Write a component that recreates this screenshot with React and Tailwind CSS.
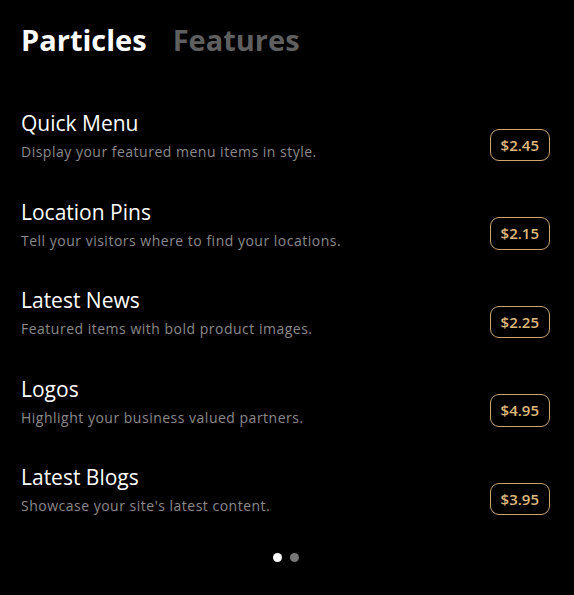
const ITEMS = [
  { title: 'Quick Menu', desc: 'Display your featured menu items in style.', price: '$2.45' },
  { title: 'Location Pins', desc: 'Tell your visitors where to find your locations.', price: '$2.15' },
  { title: 'Latest News', desc: 'Featured items with bold product images.', price: '$2.25' },
  { title: 'Logos', desc: 'Highlight your business valued partners.', price: '$4.95' },
  { title: 'Latest Blogs', desc: "Showcase your site's latest content.", price: '$3.95' },
]

export default function App() {
  return (
    <div className="min-h-[595px] bg-black pl-[21px] pr-[24px] pt-[22px] font-['Open_Sans',sans-serif]">
      <div className="flex items-baseline gap-[26px]">
        <h1 className="text-[29px] font-bold leading-9 text-white">Particles</h1>
        <h2 className="text-[29px] font-bold leading-9 text-[#5f5f5f]">Features</h2>
      </div>

      <div className="mt-[51px] flex flex-col gap-[35.5px]">
        {ITEMS.map((item) => (
          <div key={item.title} className="flex items-center justify-between">
            <div>
              <h3 className="text-[21px] font-medium leading-7 text-white">{item.title}</h3>
              <p className="mt-[5px] text-[14px] leading-5 tracking-[0.5px] text-[#8a8a8a]">{item.desc}</p>
            </div>
            <span className="mt-[19px] rounded-[9px] border border-[#c9a66b] px-[10px] py-[4px] text-[15px] font-semibold text-[#dfb97c]">
              {item.price}
            </span>
          </div>
        ))}
      </div>

      <div className="mt-[37px] flex justify-center gap-[8px] pb-[30px]">
        <span className="h-[9px] w-[9px] rounded-full bg-white" />
        <span className="h-[9px] w-[9px] rounded-full bg-[#777]" />
      </div>
    </div>
  )
}
